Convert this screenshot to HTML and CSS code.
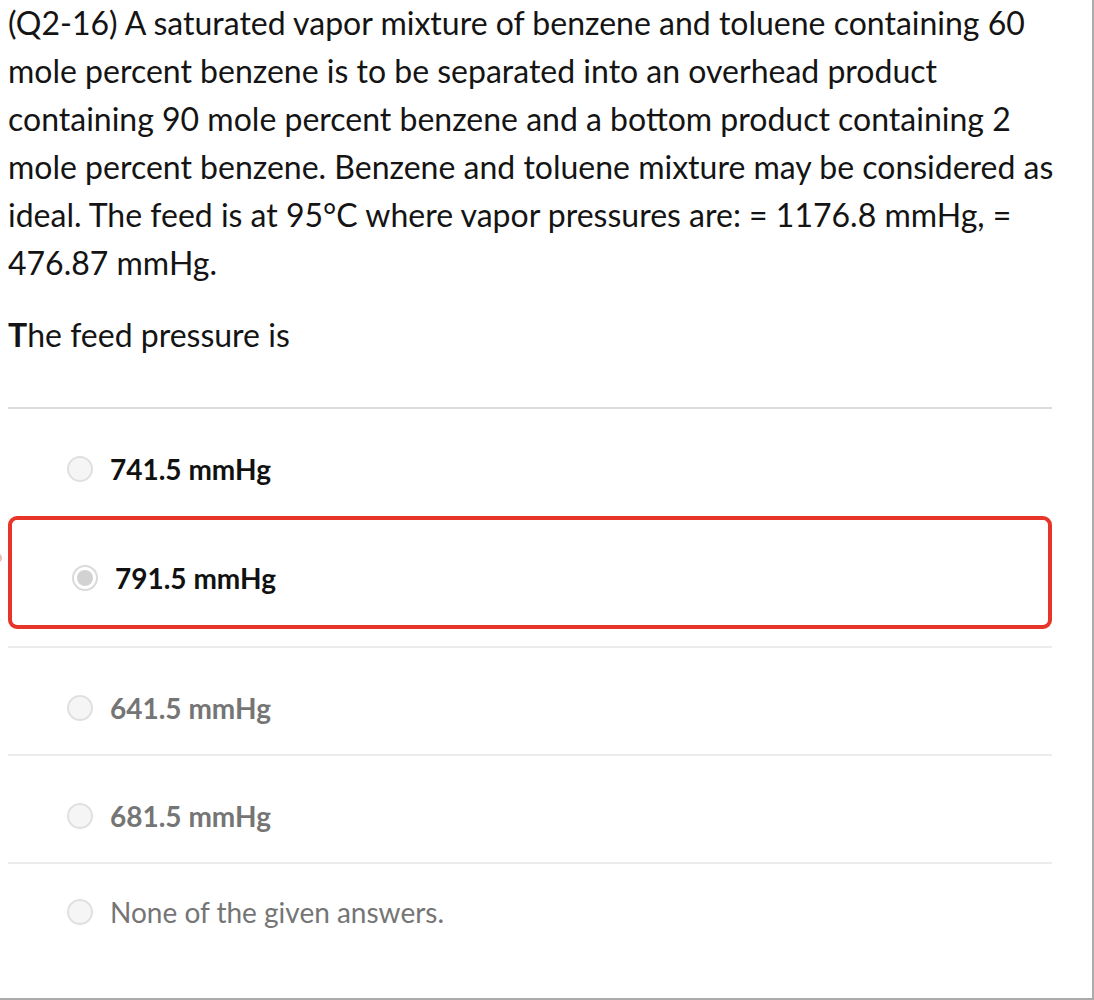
FILE: index.html
```html
<!DOCTYPE html>
<html>
<head>
<meta charset="utf-8">
<link rel="stylesheet" href="styles.css">
</head>
<body>
<div class="frame">
  <div class="question">
    <p class="stem">(Q2-16) A saturated vapor mixture of benzene and toluene containing 60 mole percent benzene is to be separated into an overhead product containing 90 mole percent benzene and a bottom product containing 2 mole percent benzene. Benzene and toluene mixture may be considered as ideal. The feed is at 95°C where vapor pressures are: = 1176.8 mmHg, = 476.87 mmHg.</p>
    <p class="prompt"><b>T</b>he feed pressure is</p>
  </div>
  <div class="options">
    <div class="opt first">
      <span class="radio"></span>
      <span class="label strong">741.5 mmHg</span>
    </div>
    <div class="opt selected">
      <span class="radio checked"></span>
      <span class="label strong">791.5 mmHg</span>
    </div>
    <div class="opt">
      <span class="radio"></span>
      <span class="label muted">641.5 mmHg</span>
    </div>
    <div class="opt">
      <span class="radio"></span>
      <span class="label muted">681.5 mmHg</span>
    </div>
    <div class="opt last">
      <span class="radio"></span>
      <span class="label muted regular">None of the given answers.</span>
    </div>
  </div>
  <span class="edge-mark"></span>
</div>
</body>
</html>
```

FILE: styles.css
```css
html, body {
  margin: 0;
  padding: 0;
  background: #fff;
}

.frame {
  position: relative;
  box-sizing: border-box;
  width: 1094px;
  height: 1000px;
  border-right: 2px solid #ababab;
  border-bottom: 2px solid #ababab;
  padding: 0 40px 0 8px;
  font-family: Lato, "Open Sans", sans-serif;
  color: #141414;
  overflow: hidden;
}

.stem {
  margin: -1px -4px 0 0;
  font-size: 32px;
  line-height: 48px;
}

.prompt {
  margin: 24px 0 0;
  font-size: 32px;
  line-height: 48px;
}

.prompt b {
  font-weight: 700;
}

.options {
  margin-top: 48px;
}

.opt {
  display: flex;
  align-items: center;
  gap: 17px;
  padding: 45px 0 31px 59px;
  border-top: 2px solid #ececec;
}

.opt.first {
  border-top-color: #dcdcdc;
  padding-bottom: 32px;
}

.opt.selected {
  border: 4px solid #e8352a;
  border-radius: 9px;
  padding: 43px 0 32px 60px;
  margin-bottom: 17px;
}

.opt.last {
  padding-top: 33px;
}

.radio {
  box-sizing: border-box;
  width: 26px;
  height: 26px;
  border-radius: 50%;
  border: 2px solid #e0e0e0;
  background: #f5f5f5;
  flex: none;
  display: flex;
  align-items: center;
  justify-content: center;
}

.radio.checked {
  border-color: #dadada;
  background: #fff;
}

.radio.checked::after {
  content: "";
  width: 16px;
  height: 16px;
  border-radius: 50%;
  background: #d2d2d2;
}

.label {
  font-size: 28px;
  line-height: 30px;
}

.strong {
  font-weight: 700;
  color: #111;
}

.muted {
  font-weight: 700;
  color: #757575;
}

.muted.regular {
  font-weight: 400;
}

.edge-mark {
  position: absolute;
  left: -8px;
  top: 553px;
  width: 10px;
  height: 10px;
  border-radius: 50%;
  background: #f1b9b4;
}
```
